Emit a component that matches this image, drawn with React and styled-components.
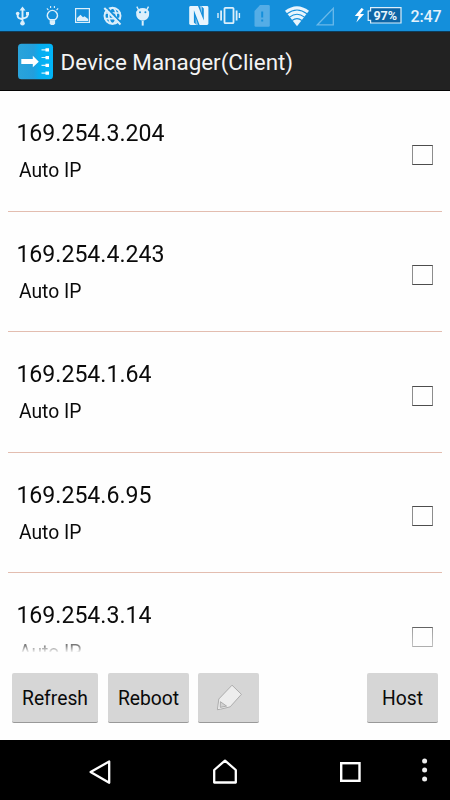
import React from "react";
import styled, { createGlobalStyle } from "styled-components";

const Global = createGlobalStyle`
  * { box-sizing: border-box; }
  html, body { margin: 0; padding: 0; background: #fff; }
  body { font-family: Roboto, "Liberation Sans", sans-serif; overflow: hidden; }
`;

const Screen = styled.div`
  width: 450px;
  height: 800px;
  display: flex;
  flex-direction: column;
  background: #fefefe;
  color: #0a0a0a;
  overflow: hidden;
`;

const StatusBar = styled.header`
  height: 32px;
  flex: none;
  display: flex;
  background: linear-gradient(#148fdb 0 31px, #0d3d5c 31px);
`;

const Slot = styled.svg`
  display: block;
  flex: none;
  width: ${(p) => p.$w}px;
  height: 31px;
`;

const Battery = styled.div`
  width: 35px;
  height: 17px;
  margin-top: 7px;
  flex: none;
  display: grid;

  > * { grid-area: 1 / 1; }
`;

const Percent = styled.span`
  padding-left: 6.6px;
  font-size: 12.6px;
  font-weight: 700;
  line-height: 17px;
  letter-spacing: -0.2px;
  color: #e9f5fd;
`;

const Clock = styled.span`
  margin-left: 8.6px;
  font-size: 16px;
  font-weight: 500;
  line-height: 33px;
  letter-spacing: -0.2px;
  color: #e4f2fc;
`;

const TitleBar = styled.div`
  height: 59px;
  flex: none;
  display: flex;
  align-items: center;
  padding: 1px 0 0 17px;
  background: #222;
  border-bottom: 1px solid #050505;
`;

const Title = styled.h1`
  margin: 1px 0 0 6.5px;
  font-size: 22.4px;
  font-weight: 400;
  line-height: 30px;
  color: #f4f4f4;
`;

const List = styled.main`
  height: 561px;
  flex: none;
  padding: 0.6px 8px 0;
  overflow: hidden;
  mask-image: linear-gradient(#000 530px, rgba(0, 0, 0, 0.55) 554px, transparent 562px);
`;

const Row = styled.div`
  height: 120.4px;
  display: flex;
  justify-content: space-between;
  padding: 27.8px 9px 0 8.4px;
  border-bottom: 1px solid #e3bdb0;
`;

const Address = styled.div`
  font-size: 23.1px;
  line-height: 29px;
`;

const Mode = styled.div`
  margin: 10.1px 0 0 2.6px;
  font-size: 19.3px;
  line-height: 26px;
`;

const Check = styled.button`
  width: 21px;
  height: 20px;
  margin-top: 25.6px;
  padding: 0;
  background: transparent;
  border: 1px solid #4d4d4d;
  border-left-color: #8d8d8d;
  border-right-color: #8d8d8d;
`;

const Actions = styled.div`
  height: 88px;
  flex: none;
  display: flex;
  padding: 21px 12px 0;
`;

const Action = styled.button`
  width: ${(p) => p.$w}px;
  height: 50px;
  margin-left: ${(p) => p.$before || "0"};
  padding: 1px 0 0;
  display: flex;
  align-items: center;
  justify-content: center;
  font: 400 19.3px Roboto, "Liberation Sans", sans-serif;
  color: #0a0a0a;
  background: #d6d6d6;
  border: 0;
  border-bottom: 1px solid #999;
  border-radius: 2px;
`;

const NavBar = styled.nav`
  height: 60px;
  flex: none;
  display: flex;
  background: #000;
`;

const NavIcon = styled.svg`
  display: block;
  flex: none;
  width: ${(p) => p.$w}px;
  height: 60px;
`;

const ICE = "#dceffb";

const Glyph = ({ x, w, children }) => (
  <Slot $w={w} viewBox={`${x} 0 ${w} 31`} fill="none" stroke={ICE}>
    {children}
  </Slot>
);

function StatusIcons() {
  return (
    <>
      <Glyph x={0} w={40}>
        <path d="M22.5 8V23M17.7 13v3.3c0 1.8 1 2.3 4.8 2.9M27.5 13v2.5c0 1.8-1.2 2.3-5 3" strokeWidth="1.9" />
        <path d="M22.5 6.5l3 4h-6zM26 12h3v3.2h-3z" fill={ICE} stroke="none" />
        <circle cx="17.7" cy="13.5" r="1.8" fill={ICE} stroke="none" />
        <circle cx="22.5" cy="23.3" r="2.3" fill={ICE} stroke="none" />
      </Glyph>
      <Glyph x={40} w={30}>
        <path d="M50.3 19.8c-2-1-3-2.5-3-4.3a5.1 5.1 0 0 1 10.2 0c0 1.8-1 3.3-3 4.3z" strokeWidth="1.4" />
        <path d="M49.7 20.3h5.4v3.2l-1.2 1.5h-3l-1.2-1.5z" fill={ICE} stroke="none" />
        <path d="M50.6 6v2M54.4 6v2M46.9 8.3l1.5 1.8M58.1 8.3l-1.5 1.8" strokeWidth="1.1" />
      </Glyph>
      <Glyph x={70} w={27}>
        <rect x="75.6" y="8.6" width="13.8" height="13.8" strokeWidth="1.2" />
        <path d="M77 21v-3l3.5-3.2 2.5 2.5 1.5-1 3.7 2.7v2z" fill={ICE} stroke="none" />
      </Glyph>
      <Glyph x={97} w={31}>
        <circle cx="112.5" cy="15.8" r="8" strokeWidth="2" />
        <ellipse cx="112.5" cy="15.8" rx="3.7" ry="8" strokeWidth="1.7" />
        <path d="M104.5 13h16M104.5 18.6h16" strokeWidth="1.7" />
        <path d="M105.9 6.7l15.5 16.5" stroke="#148fdb" strokeWidth="1.9" />
        <path d="M104.3 8l16.2 16.5" strokeWidth="2" />
      </Glyph>
      <Glyph x={128} w={54}>
        <path d="M136.2 11.5h12.9v2.6c0 4-2.8 6.5-6.4 6.5s-6.5-2.5-6.5-6.5z" fill={ICE} stroke="none" />
        <path d="M136.2 12.5c.8-2.8 3.2-4.5 6.5-4.5s5.7 1.7 6.4 4.5z" fill={ICE} stroke="none" />
        <path d="M138.6 10l-1.8-3.4M146.7 10l1.8-3.4" strokeWidth="1.4" />
        <path d="M142.7 20.8v4.8" strokeWidth="2" />
        <circle cx="140" cy="12.3" r="1" fill="#148fdb" stroke="none" />
        <circle cx="145.4" cy="12.3" r="1" fill="#148fdb" stroke="none" />
      </Glyph>
      <Glyph x={182} w={30}>
        <rect x="189.2" y="6" width="19.2" height="19" rx="1.4" fill="#e9f5fd" stroke="none" />
        <path d="M193.9 10.2l5.7 14.8h-3.2l-2.5-2.5zM203.8 20.6L198 6h3.4l2.4 2.4z" fill="#148fdb" stroke="none" />
        <path d="M195.6 17.2l2.5 7.8h-2.5zM202 13.6L199.6 6h2.4z" fill="#e9f5fd" fillOpacity=".5" stroke="none" />
      </Glyph>
      <Glyph x={212} w={34}>
        <rect x="224.5" y="7.8" width="9" height="15.4" rx=".8" strokeWidth="1.8" />
        <path d="M221.1 10.5v10M236.6 10.5v10" strokeWidth="1.8" />
        <path d="M218 13v5M239.4 13v5" strokeWidth="1.4" />
      </Glyph>
      <Glyph x={246} w={32}>
        <path d="M260 5h8.5q1.3 0 1.3 1.4v19q0 1.4-1.3 1.4h-12.7q-1.3 0-1.3-1.4V11z" fill="#55ade6" stroke="none" />
        <path d="M262.2 11.5v6M262.2 19.5v2" stroke="#148fdb" strokeWidth="2" />
      </Glyph>
      <Glyph x={278} w={34}>
        <path d="M297 26.2L285 10.8Q297 1.5 309 10.8z" fill="#e9f5fd" stroke="none" />
        <path d="M287 13.8q10-7.5 20 0M289.5 17.1q7.5-5.7 15 0M292.1 20.5q4.9-3.7 9.8 0" stroke="#148fdb" strokeWidth="1.1" />
      </Glyph>
      <Glyph x={312} w={55}>
        <path d="M317.4 24.8L333.3 8.3v16.5z" stroke="#6bb9e9" strokeWidth="1.3" />
        <path d="M361.5 8L354.8 16h4l-2.5 6.5 7.8-8.4h-4l3.6-4.8z" fill="#fff" stroke="none" />
      </Glyph>
      <Battery>
        <svg width="35" height="17" viewBox="0 0 35 17">
          <path d="M3.6.7H34v15.3H3.6v-2.6H1.2V4h2.4z" fill="#0d65a6" stroke={ICE} strokeWidth="1.2" />
        </svg>
        <Percent>97%</Percent>
      </Battery>
      <Clock>2:47</Clock>
    </>
  );
}

function AppLogo() {
  return (
    <svg width="37" height="37" viewBox="0 0 37 37">
      <defs>
        <linearGradient id="logo" x1="0" x2="1">
          <stop offset="0" stopColor="#2aa3da" />
          <stop offset=".45" stopColor="#229fdd" />
          <stop offset=".6" stopColor="#08adf0" />
          <stop offset="1" stopColor="#00b5f8" />
        </linearGradient>
      </defs>
      <rect x="1" y=".8" width="35" height="35.4" rx="3.5" fill="url(#logo)" />
      <path d="M4.3 16h11.5V12.8l6 6-6 5.5v-3.2h-11.5z" fill="#fff" />
      <path d="M24.5 6.8h5M24.5 14.5h5M24.5 22.3h5M24.5 30.1h5" stroke="#d8f3ff" strokeWidth="1.2" />
      <path d="M28.5 5.2h3.5v3.3h-3.5zM28.5 12.9h3.5v3.3h-3.5zM28.5 20.7h3.5v3.3h-3.5zM28.5 28.5h3.5v3.3h-3.5z" fill="#fff" />
    </svg>
  );
}

function Pencil() {
  return (
    <svg width="27" height="28" viewBox="-1 .5 27 28" strokeLinejoin="round">
      <path d="M16 1.7L25.4 10.8 14.2 23.3 4.5 25.7 1.4 26.2 2.8 15.5z" fill="#ededed" stroke="#a0a0a0" strokeWidth=".8" />
      <path d="M4.4 18.2L10.6 22.6 4.2 23.9z" fill="#d2d2d2" stroke="#a0a0a0" strokeWidth=".8" />
    </svg>
  );
}

const devices = ["169.254.3.204", "169.254.4.243", "169.254.1.64", "169.254.6.95", "169.254.3.14"];

export default function App() {
  return (
    <Screen>
      <Global />
      <StatusBar>
        <StatusIcons />
      </StatusBar>
      <TitleBar>
        <AppLogo />
        <Title>Device Manager(Client)</Title>
      </TitleBar>
      <List>
        {devices.map((ip) => (
          <Row key={ip}>
            <div>
              <Address>{ip}</Address>
              <Mode>Auto IP</Mode>
            </div>
            <Check role="checkbox" aria-checked="false" aria-label={ip} />
          </Row>
        ))}
      </List>
      <Actions>
        <Action $w={86}>Refresh</Action>
        <Action $w={81} $before="10px">Reboot</Action>
        <Action $w={61} $before="9px" aria-label="Edit">
          <Pencil />
        </Action>
        <Action $w={71} $before="auto">Host</Action>
      </Actions>
      <NavBar>
        <NavIcon $w={150} viewBox="0 740 150 60">
          <path d="M109.2 761.5v21.3L90.6 772z" fill="none" stroke="#fff" strokeWidth="2.3" strokeLinejoin="round" />
        </NavIcon>
        <NavIcon $w={150} viewBox="150 740 150 60">
          <path d="M214.2 782.5v-12.5l10.8-9.4 10.8 9.4v12.5z" fill="none" stroke="#fff" strokeWidth="2.3" strokeLinejoin="round" />
        </NavIcon>
        <NavIcon $w={150} viewBox="300 740 150 60">
          <rect x="341.2" y="763.2" width="18.3" height="17.6" fill="none" stroke="#fff" strokeWidth="2.4" />
          <g fill="#eee">
            <circle cx="424.6" cy="761" r="2.5" />
            <circle cx="424.6" cy="770" r="2.5" />
            <circle cx="424.6" cy="779" r="2.5" />
          </g>
        </NavIcon>
      </NavBar>
    </Screen>
  );
}
